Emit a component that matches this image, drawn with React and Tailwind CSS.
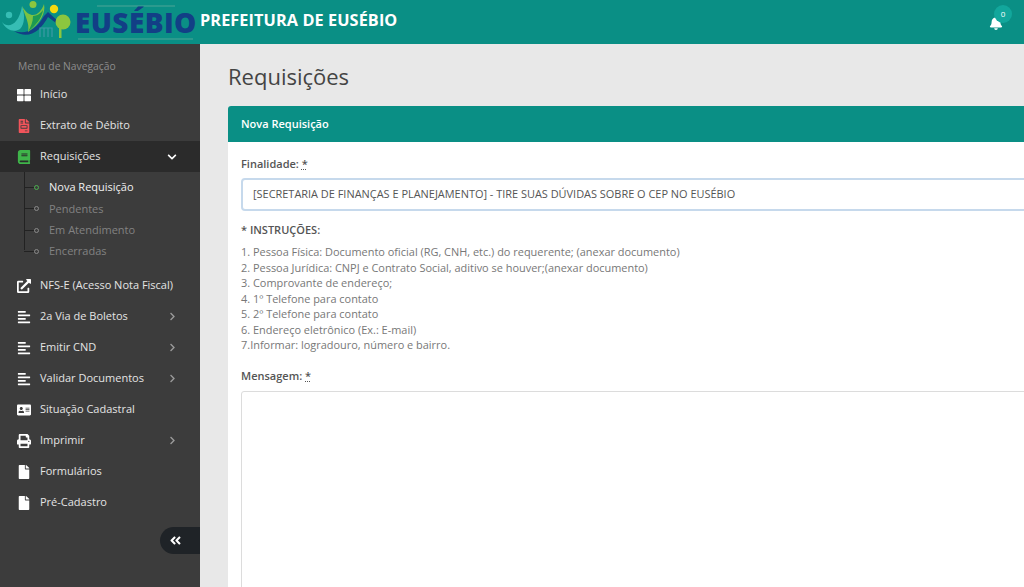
import React from 'react';
import {
  FaThLarge, FaFileInvoice, FaBook, FaExternalLinkAlt, FaAlignLeft, FaAddressCard,
  FaPrint, FaFile, FaAngleDoubleLeft, FaBell, FaChevronDown, FaChevronRight,
} from 'react-icons/fa';

const topItems = [
  { label: 'Início', icon: FaThLarge, color: 'text-white' },
  { label: 'Extrato de Débito', icon: FaFileInvoice, color: 'text-[#f2545b]' },
];

const subItems = ['Nova Requisição', 'Pendentes', 'Em Atendimento', 'Encerradas'];

const bottomItems = [
  { label: 'NFS-E (Acesso Nota Fiscal)', icon: FaExternalLinkAlt },
  { label: '2a Via de Boletos', icon: FaAlignLeft, arrow: true },
  { label: 'Emitir CND', icon: FaAlignLeft, arrow: true },
  { label: 'Validar Documentos', icon: FaAlignLeft, arrow: true },
  { label: 'Situação Cadastral', icon: FaAddressCard },
  { label: 'Imprimir', icon: FaPrint, arrow: true },
  { label: 'Formulários', icon: FaFile },
  { label: 'Pré-Cadastro', icon: FaFile },
];

const instrucoes = [
  '1. Pessoa Física: Documento oficial (RG, CNH, etc.) do requerente; (anexar documento)',
  '2. Pessoa Jurídica: CNPJ e Contrato Social, aditivo se houver;(anexar documento)',
  '3. Comprovante de endereço;',
  '4. 1º Telefone para contato',
  '5. 2º Telefone para contato',
  '6. Endereço eletrônico (Ex.: E-mail)',
  '7.Informar: logradouro, número e bairro.',
];

function Logo() {
  return (
    <div className="flex items-center w-[200px] shrink-0 overflow-hidden">
      <svg width="76" height="44" viewBox="0 0 76 44" className="shrink-0">
        <path d="M14 31 C26 35 36 30 44 16 L48 12 L60 23 L60 26 L48 17 C40 32 28 40 14 31 Z" fill="#123f86" />
        <path d="M2 22 C8 29 19 25 22 6 C25 14 25 24 20 29 C14 33 6 30 2 22 Z" fill="#36bdb4" />
        <circle cx="9" cy="15" r="3.2" fill="#36bdb4" />
        <path d="M22 6 C26 13 30 15 33 15 C38 15 42 10 44 4 C46 13 40 24 28 32 C30 24 25 16 22 6 Z" fill="#7cc242" />
        <path d="M33 16 C37 16 41 13 43 10 C42 18 36 25 28 32 C31 26 33 22 33 16 Z" fill="#1c9a52" />
        <circle cx="33" cy="4.5" r="3.5" fill="#8cc63f" />
        <circle cx="54" cy="9" r="4.2" fill="#f5d90f" />
        <path d="M40 37 V28 H52 V37 M44 28 V37 M48 28 V37" fill="none" stroke="#3c9aa6" strokeWidth="1.2" />
        <circle cx="63" cy="22" r="7.5" fill="#8cc63f" />
        <rect x="59" y="27" width="2.5" height="11" fill="#8cc63f" />
      </svg>
      <div className="flex flex-col items-center -ml-[1px]">
        <span className="h-[2px] w-[78px] bg-[#2b9a8e]" />
        <span className="font-['Open_Sans',sans-serif] font-extrabold text-[28px] leading-[31px] tracking-[0.4px] text-[#123f86]">
          EUSÉBIO
        </span>
        <span className="h-[2px] w-[115px] bg-[#2b9a8e]" />
      </div>
    </div>
  );
}

function MenuRow({ icon: Icon, label, color = 'text-white', arrow, active }) {
  return (
    <div className={`h-[31px] flex items-center pl-[17px] pr-[23px] ${active ? 'bg-[#2b2b2b]' : ''}`}>
      <span className="w-[23px] flex items-center shrink-0">
        <Icon className={`text-[14px] ${color}`} />
      </span>
      <span className="text-[11px] text-[#e4e4e4] whitespace-nowrap flex-1">{label}</span>
      {arrow === 'down' && <FaChevronDown className="text-[10px] text-white" />}
      {arrow === true && <FaChevronRight className="text-[9px] text-[#9a9a9a]" />}
    </div>
  );
}

function Sidebar() {
  return (
    <aside className="w-[200px] shrink-0 bg-[#3c3c3c] pt-[15px] relative">
      <div className="text-[10.3px] leading-[15px] text-[#8d8d8d] pl-[18px] mb-[5px]">Menu de Navegação</div>
      {topItems.map((item) => (
        <MenuRow key={item.label} {...item} />
      ))}
      <MenuRow icon={FaBook} label="Requisições" color="text-[#3fb54a]" arrow="down" active />
      <div className="relative pb-[8px] pt-[5px]">
        <div className="absolute left-[24px] top-0 h-[78px] w-px bg-[#222]" />
        {subItems.map((sub, i) => (
          <div key={sub} className="h-[21.25px] flex items-center pl-[24px] relative">
            <span className="w-[10px] h-px bg-[#222]" />
            <span className={`w-[5px] h-[5px] rounded-full border ${i === 0 ? 'border-[#4caf50]' : 'border-[#8a8a8a]'}`} />
            <span className={`ml-[10px] text-[11px] whitespace-nowrap ${i === 0 ? 'text-[#f0f0f0]' : 'text-[#828282]'}`}>
              {sub}
            </span>
          </div>
        ))}
      </div>
      {bottomItems.map((item) => (
        <MenuRow key={item.label} {...item} />
      ))}
      <div className="absolute right-0 top-[483px] w-[40px] h-[27px] bg-[#1f2327] rounded-l-full flex items-center justify-center">
        <FaAngleDoubleLeft className="text-white text-[13px] mr-[9px]" />
      </div>
    </aside>
  );
}

export default function App() {
  return (
    <div className="w-[1024px] h-[587px] overflow-hidden flex flex-col bg-[#e8e8e8] font-['Open_Sans',sans-serif]">
      <header className="h-[44px] shrink-0 bg-[#0a8f85] flex items-center">
        <Logo />
        <div className="text-white font-bold text-[16.25px] tracking-[0.1px] whitespace-nowrap mb-[4px]">PREFEITURA DE EUSÉBIO</div>
        <div className="ml-auto relative mr-[21px] mt-[1px]">
          <FaBell className="text-white text-[14px]" />
          <span className="absolute -top-[11px] left-[5px] w-[18px] h-[18px] rounded-full bg-[#12a79c] text-white text-[8px] flex items-center justify-center">
            0
          </span>
        </div>
      </header>
      <div className="flex flex-1 min-h-0">
        <Sidebar />
        <main className="flex-1 min-w-0 pl-[28px] pt-[17px]">
          <h1 className="text-[22px] leading-[30px] text-[#444] mb-[15px]">Requisições</h1>
          <section className="w-[830px] bg-white rounded-t-[3px] pb-[40px]">
            <div className="h-[36px] bg-[#0a8f85] rounded-t-[3px] flex items-center px-[13px] text-white font-semibold text-[11px]">
              Nova Requisição
            </div>
            <div className="px-[13px] pt-[14px]">
              <label className="block text-[11px] leading-[16px] font-semibold text-[#555] mb-[6px]">
                Finalidade: <span className="underline decoration-dotted">*</span>
              </label>
              <div className="h-[33px] border-2 border-[#c6d9ec] rounded-[4px] flex items-center pl-[10px] text-[10.95px] text-[#555] whitespace-nowrap">
                [SECRETARIA DE FINANÇAS E PLANEJAMENTO] - TIRE SUAS DÚVIDAS SOBRE O CEP NO EUSÉBIO
              </div>
              <div className="mt-[11px] text-[11px] leading-[16px] font-semibold text-[#555]">* INSTRUÇÕES:</div>
              <div className="mt-[6px]">
                {instrucoes.map((line) => (
                  <p key={line} className="text-[10.95px] leading-[15.5px] text-[#777] whitespace-nowrap">
                    {line}
                  </p>
                ))}
              </div>
              <label className="block mt-[15px] text-[11px] leading-[16px] font-semibold text-[#555] mb-[7px]">
                Mensagem: <span className="underline decoration-dotted">*</span>
              </label>
              <div className="h-[260px] border border-[#dcdcdc] rounded-[3px]" />
            </div>
          </section>
        </main>
      </div>
    </div>
  );
}
